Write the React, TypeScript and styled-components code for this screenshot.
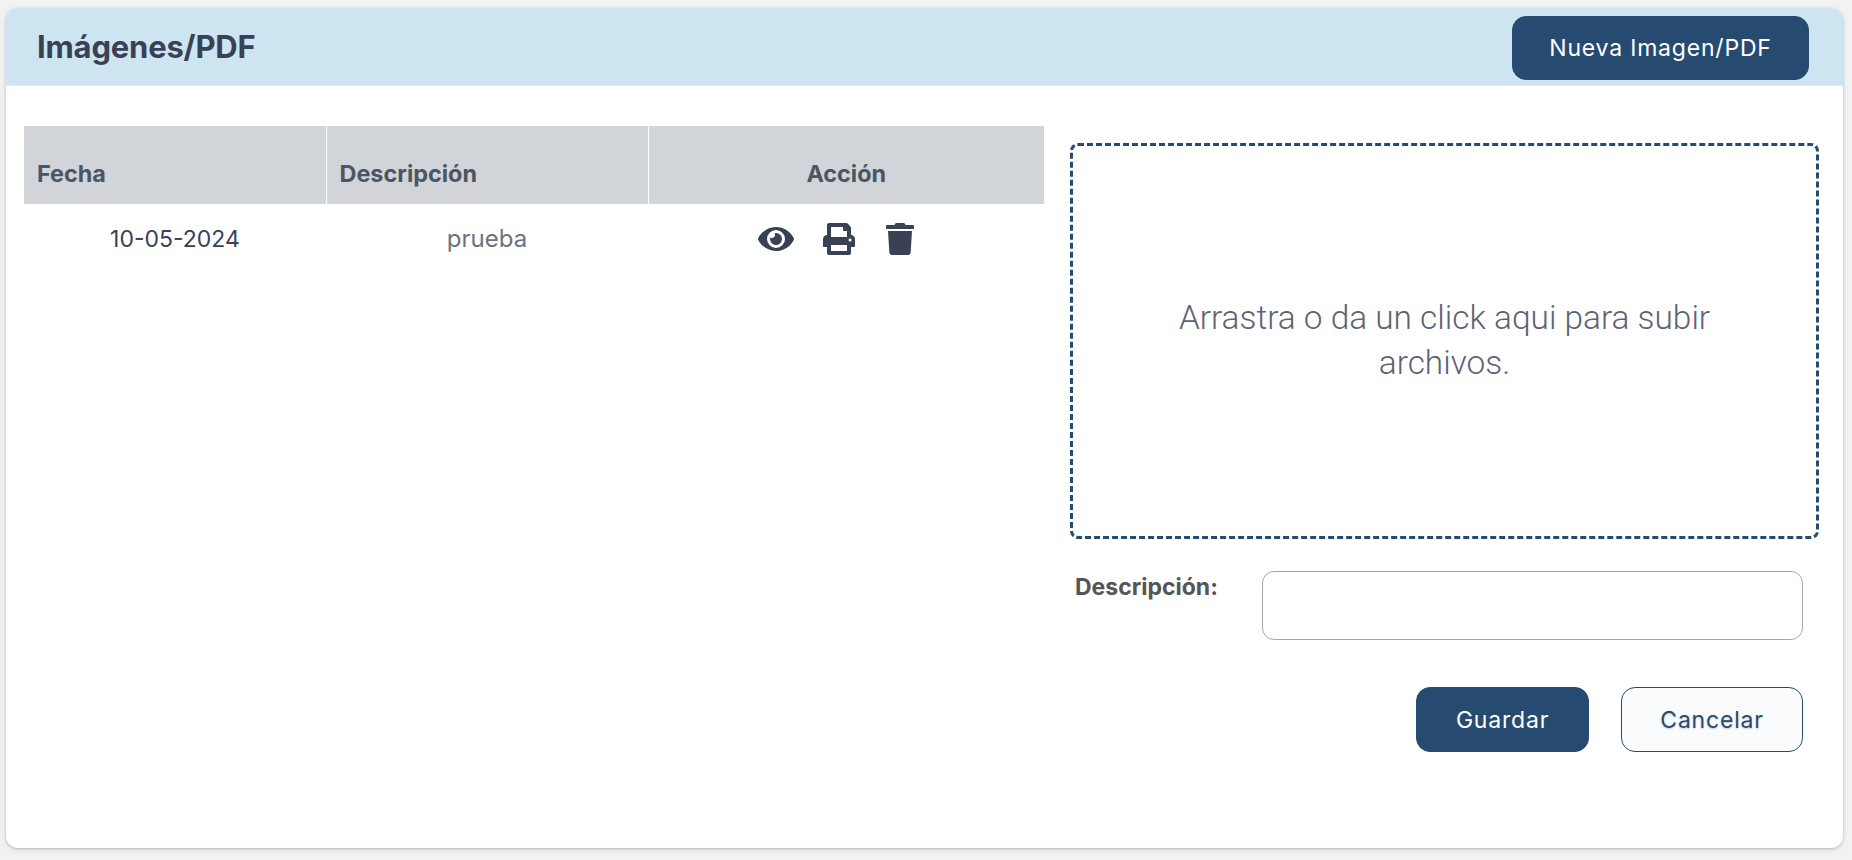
import * as React from "react";
import styled, { createGlobalStyle } from "styled-components";
import { FaEye, FaPrint, FaTrash } from "react-icons/fa";

const navy = "#274b70";
const slate = "#3a4154";
const uiFont = `Inter, "Liberation Sans", sans-serif`;

const GlobalStyle = createGlobalStyle`
  html, body {
    margin: 0;
    padding: 0;
    background-color: #f2f2f2;
    font-family: ${uiFont};
  }
  * { box-sizing: border-box; }
`;

const Page = styled.div`
  width: 1852px;
  height: 860px;
  padding: 8px 9px 12px 6px;
  overflow: hidden;
`;

const Card = styled.section`
  height: 100%;
  background-color: #fff;
  border-radius: 12px;
  overflow: hidden;
  box-shadow: 0 1px 3px rgba(0, 0, 0, 0.22), 0 2px 8px rgba(0, 0, 0, 0.06);
`;

const Header = styled.header`
  height: 78px;
  display: flex;
  align-items: center;
  justify-content: space-between;
  padding: 3px 34px 0 31px;
  background-color: #cde5f1;
  border-bottom: 1px solid #dfe6ea;
`;

const Title = styled.h1`
  margin: 0 0 3px;
  font-size: 31px;
  font-weight: 700;
  letter-spacing: -0.2px;
  color: ${slate};
`;

const Button = styled.button<{ $w: number; $outline?: boolean }>`
  width: ${(p) => p.$w}px;
  height: 65px;
  border-radius: 14px;
  border: 1px solid ${navy};
  background-color: ${(p) => (p.$outline ? "#f9fbfd" : navy)};
  color: ${(p) => (p.$outline ? navy : "#fff")};
  font-family: ${uiFont};
  font-size: 23px;
  font-weight: 400;
  letter-spacing: 0.8px;
  padding: 0;
  text-shadow: ${(p) => (p.$outline ? "0 1px 2px rgba(0, 0, 0, 0.2)" : "none")};
`;

const HeaderButton = styled(Button)`
  height: 64px;
`;

const Body = styled.div`
  display: grid;
  grid-template-columns: 1020px 749px;
  column-gap: 26px;
  padding: 40px 0 0 18px;
`;

const Table = styled.table`
  width: 1020px;
  border-collapse: collapse;
  table-layout: fixed;
`;

const HeadCell = styled.th<{ $w?: number; $center?: boolean }>`
  width: ${(p) => (p.$w ? `${p.$w}px` : "auto")};
  height: 78px;
  padding: 17px 13px 0;
  background-color: #d1d4d8;
  border-left: 1px solid #fff;
  text-align: ${(p) => (p.$center ? "center" : "left")};
  font-size: 23.4px;
  font-weight: 700;
  color: #4b5563;

  &:first-child {
    border-left: 0;
  }
`;

const Cell = styled.td<{ $muted?: boolean }>`
  height: 69px;
  padding: 0;
  text-align: center;
  font-size: ${(p) => (p.$muted ? "24px" : "23px")};
  color: ${(p) => (p.$muted ? "#6b7280" : slate)};
`;

const Actions = styled.div`
  display: flex;
  justify-content: center;
  align-items: center;
  gap: 29px;
  padding-right: 18px;
  color: ${slate};

  svg {
    display: block;
  }
`;

const RightColumn = styled.div`
  padding-top: 17px;
`;

const DropZone = styled.div`
  height: 396px;
  display: flex;
  align-items: center;
  justify-content: center;
  padding: 0 90px 2px;
  border: 3px dashed ${navy};
  border-radius: 8px;
  text-align: center;
  font-family: Roboto, "Liberation Sans", sans-serif;
  font-size: 33.4px;
  font-weight: 300;
  line-height: 45px;
  color: #5c6373;
`;

const FormRow = styled.div`
  display: flex;
  justify-content: space-between;
  margin-top: 32px;
  padding: 0 16px 0 5px;
`;

const Label = styled.label`
  padding-top: 2px;
  font-size: 23px;
  line-height: 28px;
  font-weight: 700;
  color: #555;
`;

const TextInput = styled.input`
  width: 541px;
  height: 69px;
  border: 1px solid #a6a6ad;
  border-radius: 12px;
  background-color: #fff;
`;

const ButtonRow = styled.div`
  display: flex;
  justify-content: flex-end;
  gap: 32px;
  margin-top: 47px;
  padding-right: 16px;
`;

const App = () => {
  return (
    <Page>
      <GlobalStyle />
      <Card>
        <Header>
          <Title>Imágenes/PDF</Title>
          <HeaderButton $w={297}>Nueva Imagen/PDF</HeaderButton>
        </Header>
        <Body>
          <div>
            <Table>
              <thead>
                <tr>
                  <HeadCell $w={302}>Fecha</HeadCell>
                  <HeadCell $w={322}>Descripción</HeadCell>
                  <HeadCell $center>Acción</HeadCell>
                </tr>
              </thead>
              <tbody>
                <tr>
                  <Cell>10-05-2024</Cell>
                  <Cell $muted>prueba</Cell>
                  <Cell>
                    <Actions>
                      <FaEye size={36} />
                      <FaPrint size={32} />
                      <FaTrash size={32} />
                    </Actions>
                  </Cell>
                </tr>
              </tbody>
            </Table>
          </div>
          <RightColumn>
            <DropZone>Arrastra o da un click aqui para subir archivos.</DropZone>
            <FormRow>
              <Label>Descripción:</Label>
              <TextInput type="text" />
            </FormRow>
            <ButtonRow>
              <Button $w={173}>Guardar</Button>
              <Button $w={182} $outline>
                Cancelar
              </Button>
            </ButtonRow>
          </RightColumn>
        </Body>
      </Card>
    </Page>
  );
};

export default App;
